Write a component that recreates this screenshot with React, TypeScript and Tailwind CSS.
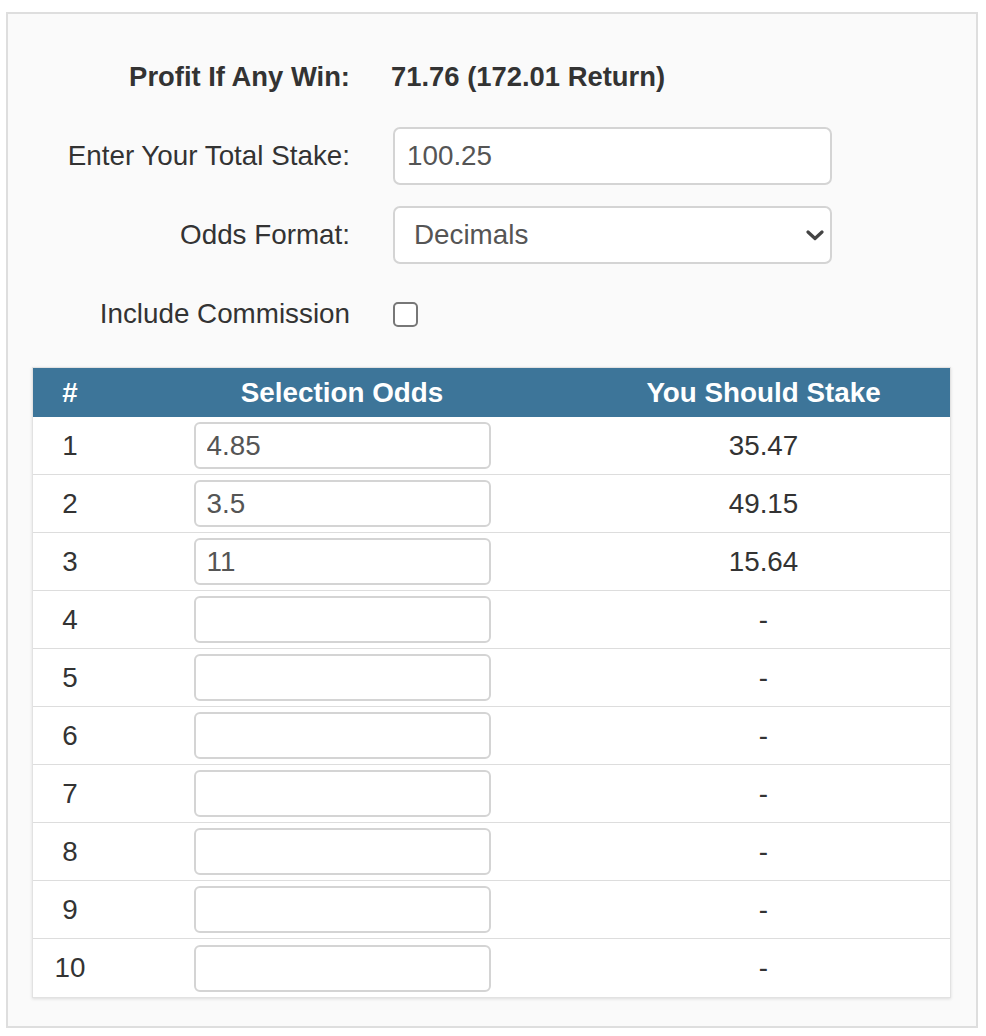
import React, { useState } from "react";

const odds = ["4.85", "3.5", "11", "", "", "", "", "", "", ""];
const stakes = ["35.47", "49.15", "15.64", "-", "-", "-", "-", "-", "-", "-"];

const Chevron = () => (
  <svg width="18" height="11" viewBox="0 0 18 11" className="absolute right-[8px] top-[24px] pointer-events-none">
    <path d="M2 2 L9 8.5 L16 2" fill="none" stroke="#444" strokeWidth="3.2" strokeLinecap="round" strokeLinejoin="round" />
  </svg>
);

const App = () => {
  const [stake, setStake] = useState("100.25");
  const [format, setFormat] = useState("Decimals");
  const [commission, setCommission] = useState(false);

  return (
    <div className="w-[986px] h-[1036px] bg-white pt-[12px] pl-[6px] text-[#333] font-['Liberation_Sans',Arial,sans-serif]">
      <div className="w-[972px] h-[1016px] border-2 border-[#dedede] bg-[#fafafa] pt-[34px] px-[24px]">
        {/* Settings rows */}
        <div className="flex flex-col gap-[21px]">
          <div className="flex items-center h-[58px]">
            <div className="w-[318px] text-right font-bold text-[27.4px]">Profit If Any Win:</div>
            <div className="ml-[41px] font-bold text-[27.4px]">71.76 (172.01 Return)</div>
          </div>
          <div className="flex items-center h-[58px]">
            <div className="w-[318px] text-right text-[27.8px]">Enter Your Total Stake:</div>
            <input
              value={stake}
              onChange={(e) => setStake(e.target.value)}
              className="ml-[43px] w-[439px] h-[58px] rounded-[7px] border-2 border-[#d4d4d4] bg-white px-[12px] text-[27.8px] text-[#555] outline-none"
            />
          </div>
          <div className="flex items-center h-[58px]">
            <div className="w-[318px] text-right text-[27.8px]">Odds Format:</div>
            <div className="relative ml-[43px]">
              <select
                value={format}
                onChange={(e) => setFormat(e.target.value)}
                className="appearance-none w-[439px] h-[58px] rounded-[7px] border-2 border-[#d4d4d4] bg-white px-[19px] text-[27.8px] text-[#555] outline-none"
              >
                <option>Decimals</option>
                <option>Fractions</option>
                <option>American</option>
              </select>
              <Chevron />
            </div>
          </div>
          <div className="flex items-center h-[58px]">
            <div className="w-[318px] text-right text-[27.8px]">Include Commission</div>
            <button
              onClick={() => setCommission(!commission)}
              className="ml-[43px] w-[25px] h-[25px] rounded-[5px] border-2 border-[#777] bg-white"
            />
          </div>
        </div>

        {/* Stakes table */}
        <div className="mt-[24px] w-[919px] border border-[#e2e2e2] bg-white shadow-[0_1px_3px_rgba(0,0,0,0.12)]">
          <div className="grid grid-cols-[74px_470px_1fr] h-[49px] items-center bg-[#3d7599] text-white font-bold text-[27.8px]">
            <div className="text-center">#</div>
            <div className="text-center">Selection Odds</div>
            <div className="text-center">You Should Stake</div>
          </div>
          {odds.map((o, i) => (
            <div
              key={i}
              className={`grid grid-cols-[74px_470px_1fr] h-[58px] items-center text-[27.8px] ${i < odds.length - 1 ? "border-b border-[#dddddd]" : ""}`}
            >
              <div className="text-center">{i + 1}</div>
              <div className="flex justify-center">
                <input
                  defaultValue={o}
                  className="w-[297px] h-[47px] rounded-[6px] border-2 border-[#d4d4d4] bg-white px-[11px] text-[27.8px] text-[#555] outline-none"
                />
              </div>
              <div className="text-center">{stakes[i]}</div>
            </div>
          ))}
        </div>
      </div>
    </div>
  );
};

export default App;
